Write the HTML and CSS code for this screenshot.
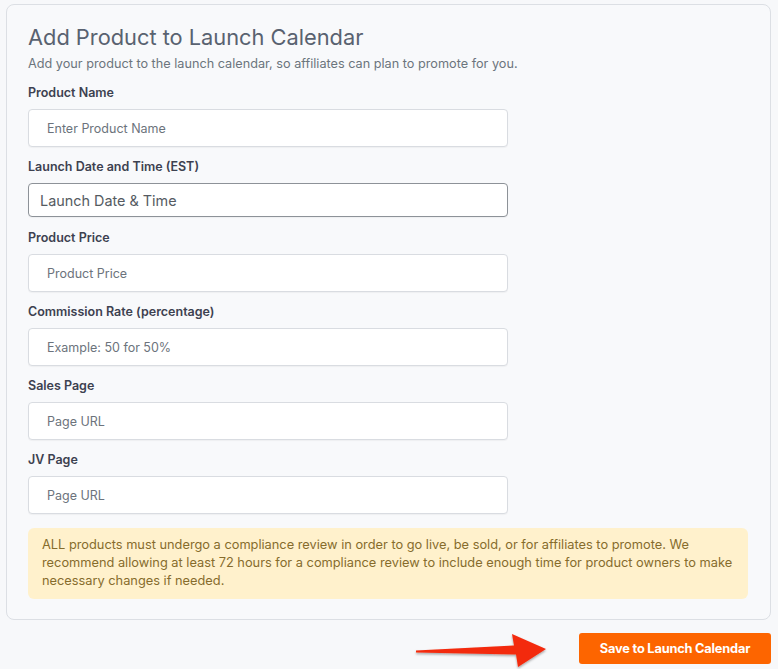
FILE: index.html
```html
<!DOCTYPE html>
<html>
<head>
<meta charset="utf-8">
<link rel="stylesheet" href="styles.css">
</head>
<body>
<div class="page">
  <div class="card">
    <h1 class="title">Add Product to Launch Calendar</h1>
    <p class="subtitle">Add your product to the launch calendar, so affiliates can plan to promote for you.</p>

    <div class="group">
      <label class="label">Product Name</label>
      <input class="input" type="text" placeholder="Enter Product Name">
    </div>
    <div class="group">
      <label class="label">Launch Date and Time (EST)</label>
      <input class="input input-date" type="text" placeholder="Launch Date &amp; Time">
    </div>
    <div class="group">
      <label class="label">Product Price</label>
      <input class="input" type="text" placeholder="Product Price">
    </div>
    <div class="group">
      <label class="label">Commission Rate (percentage)</label>
      <input class="input" type="text" placeholder="Example: 50 for 50%">
    </div>
    <div class="group">
      <label class="label">Sales Page</label>
      <input class="input" type="text" placeholder="Page URL">
    </div>
    <div class="group">
      <label class="label">JV Page</label>
      <input class="input" type="text" placeholder="Page URL">
    </div>

    <div class="alert">ALL products must undergo a compliance review in order to go live, be sold, or for affiliates to promote. We recommend allowing at least 72 hours for a compliance review to include enough time for product owners to make necessary changes if needed.</div>
  </div>

  <div class="footer">
    <svg class="arrow" width="136" height="40" viewBox="0 0 136 40">
      <defs>
        <filter id="sh" x="-10%" y="-30%" width="120%" height="160%">
          <feDropShadow dx="0" dy="1.5" stdDeviation="1.2" flood-color="#000" flood-opacity="0.35"/>
        </filter>
      </defs>
      <path filter="url(#sh)" fill="#f3290c" d="M2 20.5 L100 15.5 L98 4 L132 19 L104 37 L102 24.5 L2 22.5 Z"/>
    </svg>
    <button class="btn">Save to Launch Calendar</button>
  </div>
</div>
</body>
</html>
```
FILE: styles.css
```css
* { box-sizing: border-box; }
html, body {
  margin: 0;
  padding: 0;
  background: #f7f8fa;
  font-family: Inter, "Noto Sans", sans-serif;
}
.page {
  padding: 4px 7px 0 6px;
}
.card {
  background: #f8f9fb;
  border: 1px solid #dcdfe4;
  border-radius: 8px;
  padding: 18px 22px 20px 21px;
}
.title {
  margin: 0;
  font-size: 21.8px;
  line-height: 28px;
  font-weight: 400;
  color: #596270;
}
.subtitle {
  margin: 4px 0 0 0;
  font-size: 12.7px;
  line-height: 18px;
  color: #6c757d;
}
.group {
  margin-top: 10px;
  display: flex;
  flex-direction: column;
}
.label {
  font-size: 12.5px;
  line-height: 20px;
  font-weight: 600;
  color: #3d4150;
  margin-bottom: 6px;
}
.input {
  width: 480px;
  height: 38px;
  border: 1px solid #d9dce1;
  border-radius: 4px;
  background: #fff;
  padding: 0 18px;
  font-family: Inter, "Noto Sans", sans-serif;
  font-size: 12.5px;
  color: #495057;
  box-shadow: 0 1px 1px rgba(0,0,0,0.04);
}
.input::placeholder { color: #6c737c; }
.input-date {
  height: 34px;
  border-color: #8d9298;
  padding: 0 11px;
  font-size: 14.4px;
  margin-bottom: 1px;
}
.input-date::placeholder { color: #555b62; }
.alert {
  margin-top: 14px;
  background: #fff1cc;
  border-radius: 6px;
  padding: 8px 14px 9px 14px;
  font-size: 12.8px;
  line-height: 18px;
  color: #866c2c;
}
.footer {
  display: flex;
  justify-content: flex-end;
  align-items: center;
  margin-top: 7px;
}
.arrow {
  margin-right: 29px;
  margin-top: 3px;
}
.btn {
  width: 192px;
  height: 31px;
  border: none;
  border-radius: 3px;
  background: #fd6500;
  color: #fff;
  font-family: Inter, "Noto Sans", sans-serif;
  font-weight: 700;
  font-size: 12.8px;
  letter-spacing: -0.2px;
}
```
